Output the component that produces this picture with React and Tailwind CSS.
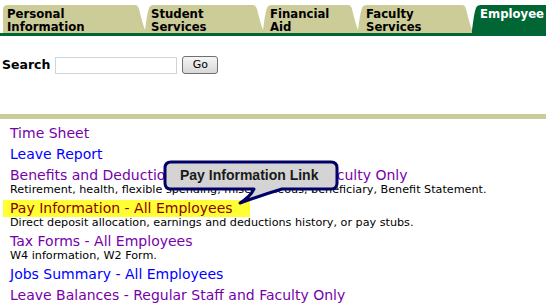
import React from "react";

function TabShape({ w, color, firstTab }) {
  const left = firstTab
    ? `M0,28 L0,5 Q0,0 5,0`
    : `M0,28 L0,25 C1,19 2,8 4,3 Q5,0 9,0`;
  const d = `${left} L${w - 10},0 Q${w - 7},0 ${w - 6},4 C${w - 4},12 ${w - 2},20 ${w},25 L${w},28 Z`;
  return (
    <svg className="absolute inset-0" width={w} height={28} viewBox={`0 0 ${w} 28`}>
      <path d={d} fill={color} />
    </svg>
  );
}

function Tab({ w, wClass, l1, l2, active, firstTab, padClass }) {
  return (
    <div className={`relative shrink-0 h-[28px] ${wClass}`}>
      <TabShape w={w} color={active ? "#006633" : "#cccc99"} firstTab={firstTab} />
      <div
        className={`relative ${padClass} pt-[3px] font-['DejaVu_Sans',sans-serif] font-bold text-[11.7px] leading-[12.5px] whitespace-nowrap ${
          active ? "text-white" : "text-black"
        }`}
      >
        <div>{l1}</div>
        {l2 ? <div>{l2}</div> : null}
      </div>
    </div>
  );
}

function Item({ label, color, desc, highlight }) {
  return (
    <li className="mb-[4px]">
      {highlight ? (
        <div className="ml-[-7px] w-[247px] pl-[7px] bg-[#ffff33] text-[14px] leading-[17px] text-[#8b0000]">
          {label}
        </div>
      ) : (
        <div className={`text-[14px] leading-[17px] ${color}`}>{label}</div>
      )}
      {desc ? (
        <div className="text-[11.2px] leading-[12px] text-black whitespace-nowrap">{desc}</div>
      ) : null}
    </li>
  );
}

export default function App() {
  const purple = "text-[#7700aa]";
  const blue = "text-[#0000ff]";
  return (
    <div className="relative w-[546px] h-[305px] overflow-hidden bg-white font-['DejaVu_Sans',sans-serif]">
      <div className="flex pt-[5px] pl-[3px] overflow-hidden">
        <Tab w={142} wClass="w-[142px]" l1="Personal" l2="Information" firstTab padClass="pl-[4px]" />
        <Tab w={118} wClass="w-[118px]" l1="Student" l2="Services" padClass="pl-[6px]" />
        <Tab w={95} wClass="w-[95px]" l1="Financial" l2="Aid" padClass="pl-[7px]" />
        <Tab w={114} wClass="w-[114px]" l1="Faculty" l2="Services" padClass="pl-[8px]" />
        <Tab w={110} wClass="w-[110px]" l1="Employee" active padClass="pl-[8px]" />
      </div>
      <div className="h-[3px] bg-[#006633]" />

      <div className="flex items-center h-[18px] mt-[20px] pl-[2px]">
        <span className="font-bold text-[12.5px] text-black mr-[5px]">Search</span>
        <div className="w-[122px] h-[17px] border border-[#cfd3dc] bg-white" />
        <div className="ml-[5px] w-[36px] h-[18px] rounded-[3px] border border-[#707070] bg-gradient-to-b from-[#f6f6f6] to-[#d8d8d8] flex items-center justify-center text-[11px] text-black">
          Go
        </div>
      </div>

      <div className="mt-[40px] h-[5px] bg-[#cccc99]" />

      <ul className="pt-[6px] pl-[10px]">
        <Item label="Time Sheet" color={purple} />
        <Item label="Leave Report" color={blue} />
        <Item
          label="Benefits and Deductions - Regular Staff and Faculty Only"
          color={purple}
          desc="Retirement, health, flexible spending, miscellaneous, beneficiary, Benefit Statement."
        />
        <Item
          label="Pay Information - All Employees"
          highlight
          desc="Direct deposit allocation, earnings and deductions history, or pay stubs."
        />
        <Item label="Tax Forms - All Employees" color={purple} desc="W4 information, W2 Form." />
        <Item label="Jobs Summary - All Employees" color={blue} />
        <Item label="Leave Balances - Regular Staff and Faculty Only" color={purple} />
      </ul>

      <svg className="absolute left-[160px] top-[157px]" width="185" height="52" viewBox="0 0 185 52">
        <path
          d="M11,5 H171 Q177,5 177,11 V26 Q177,32 171,32 H122 Q102,38 80,46 Q90,40 94,32 H11 Q5,32 5,26 V11 Q5,5 11,5 Z"
          fill="#d4d4d4"
          stroke="#000066"
          strokeWidth="3"
          strokeLinejoin="round"
        />
      </svg>
      <div className="absolute left-[165px] top-[162px] w-[172px] h-[27px] flex items-center pl-[15px] font-['Liberation_Sans',sans-serif] font-bold text-[14px] text-[#1a1a1a] whitespace-nowrap">
        Pay Information Link
      </div>
    </div>
  );
}
